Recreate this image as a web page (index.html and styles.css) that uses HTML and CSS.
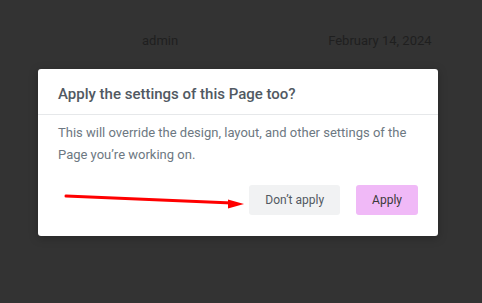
FILE: index.html
```html
<!DOCTYPE html>
<html lang="en">
<head>
    <meta charset="UTF-8">
    <meta name="viewport" content="width=device-width, initial-scale=1.0">
    <title>Apply settings</title>
    <link rel="stylesheet" href="styles.css">
</head>
<body>
    <div class="post-meta">
        <span class="author">admin</span>
        <span class="date">February 14, 2024</span>
    </div>
    <div class="dialog">
        <div class="dialog-header">Apply the settings of this Page too?</div>
        <div class="dialog-body">
            <p>This will override the design, layout, and other settings of the Page you’re working on.</p>
            <div class="dialog-buttons">
                <button class="btn btn-cancel">Don’t apply</button>
                <button class="btn btn-apply">Apply</button>
            </div>
        </div>
        <!-- annotation arrow -->
        <svg class="arrow" width="220" height="20" viewBox="0 0 220 20">
            <line x1="28" y1="7" x2="194" y2="14" stroke="#ff0000" stroke-width="3" stroke-linecap="round"/>
            <polygon points="190,10.5 206,15 190,19.5" fill="#ff0000"/>
        </svg>
    </div>
</body>
</html>
```

FILE: styles.css
```css
body {
    margin: 0;
    padding: 0;
    background: #333333;
    font-family: Roboto, "Liberation Sans", sans-serif;
    width: 482px;
    height: 303px;
    overflow: hidden;
}
.post-meta {
    display: flex;
    padding: 31px 0 0 142px;
    height: 19px;
    font-size: 13px;
    line-height: 19px;
    color: #1f1f1f;
}
.date {
    margin-left: 150px;
}
.dialog {
    position: relative;
    width: 400px;
    margin: 19px 0 0 38px;
    background-color: #fff;
    border-radius: 3px;
    box-shadow: 0 2px 10px rgba(0, 0, 0, 0.25);
}
.dialog-header {
    padding: 15px 20px 10px;
    font-size: 15px;
    line-height: 20px;
    font-weight: 500;
    color: #515962;
    border-bottom: 1px solid #e6e8ea;
}
.dialog-body {
    padding: 7px 20px 21px;
}
.dialog-body p {
    margin: 0;
    font-size: 13px;
    line-height: 22px;
    color: #6d7882;
}
.dialog-buttons {
    display: flex;
    justify-content: flex-end;
    gap: 16px;
    margin-top: 19px;
}
.btn {
    height: 30px;
    padding: 0 16px;
    border: none;
    border-radius: 3px;
    font-family: Roboto, "Liberation Sans", sans-serif;
    font-size: 12px;
    color: #515962;
}
.btn-cancel {
    background-color: #f1f2f3;
}
.btn-apply {
    background-color: #f0b9f7;
    color: #3a3a3a;
}
.arrow {
    position: absolute;
    left: 0;
    top: 120px;
    overflow: visible;
}
```
